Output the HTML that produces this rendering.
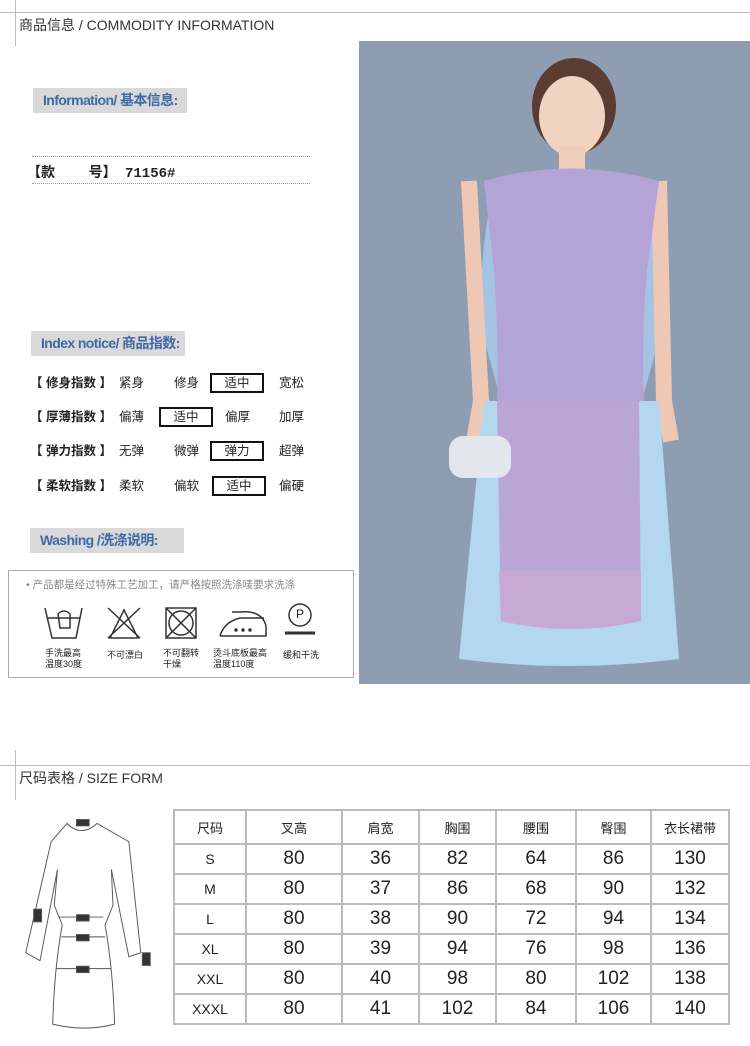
<!DOCTYPE html>
<html><head><meta charset="utf-8"><style>
*{margin:0;padding:0;box-sizing:border-box}
body{width:750px;height:1046px;background:#fff;position:relative;overflow:hidden;font-family:"Liberation Sans","Noto Sans CJK SC",sans-serif;color:#222}
.a{position:absolute}
.lbl{position:absolute;background:#d9d9d9;color:#3f6aa6;font-size:14px;letter-spacing:-0.6px;height:25px;line-height:25px;padding-left:10px;font-weight:bold}
.row{position:absolute;left:30px;font-size:12.5px;height:20px;line-height:20px}
.row span{position:absolute;white-space:nowrap}
.box{border:2px solid #111;text-align:center;width:54px;height:20px;line-height:16px;top:0}
table{position:absolute;left:173px;top:809px;border-collapse:collapse}
td{border:2px solid #bbb;text-align:center;font-size:19px;height:30px;padding:0}
tr:first-child td{font-size:13px;height:34px}
</style></head><body>
<div class="a" style="left:0;top:12px;width:750px;height:1px;background:#bbb"></div>
<div class="a" style="left:15px;top:0;width:1px;height:46px;background:#bbb"></div>
<div class="a" style="left:19px;top:15px;font-size:14px;color:#333">商品信息 / COMMODITY INFORMATION</div>

<div class="lbl" style="left:33px;top:88px;width:154px">Information/ 基本信息:</div>
<div class="a" style="left:32px;top:156px;width:278px;border-top:1px dotted #999"></div>
<div class="a" style="left:27px;top:162px;font-size:14px;font-weight:bold;font-family:'Liberation Mono','Noto Sans CJK SC',monospace">【款&nbsp;&nbsp;&nbsp;&nbsp;号】&nbsp;71156#</div>
<div class="a" style="left:32px;top:183px;width:278px;border-top:1px dotted #999"></div>

<div class="lbl" style="left:31px;top:331px;width:154px">Index notice/ 商品指数:</div>
<div class="row" style="top:373px"><span style="left:0;font-weight:bold">【 修身指数 】</span><span style="left:89px">紧身</span><span style="left:144px">修身</span><span class="box" style="left:180px">适中</span><span style="left:249px">宽松</span></div>
<div class="row" style="top:407px"><span style="left:0;font-weight:bold">【 厚薄指数 】</span><span style="left:89px">偏薄</span><span class="box" style="left:129px">适中</span><span style="left:195px">偏厚</span><span style="left:249px">加厚</span></div>
<div class="row" style="top:441px"><span style="left:0;font-weight:bold">【 弹力指数 】</span><span style="left:89px">无弹</span><span style="left:144px">微弹</span><span class="box" style="left:180px">弹力</span><span style="left:249px">超弹</span></div>
<div class="row" style="top:476px"><span style="left:0;font-weight:bold">【 柔软指数 】</span><span style="left:89px">柔软</span><span style="left:144px">偏软</span><span class="box" style="left:182px">适中</span><span style="left:249px">偏硬</span></div>

<div class="lbl" style="left:30px;top:528px;width:154px">Washing /洗涤说明:</div>
<div class="a" style="left:8px;top:570px;width:346px;height:108px;border:1px solid #aaa"></div>
<div class="a" style="left:26px;top:577px;font-size:10.5px;color:#888">• 产品都是经过特殊工艺加工，请严格按照洗涤唛要求洗涤</div>
<svg class="a" style="left:0;top:600px" width="360" height="50" fill="none" stroke="#333" stroke-width="1.5">
<path d="M45 8 L52 38 H76 L82 8 M48 18 H80"/><path d="M58 14 q6 -6 12 0 v14 h-10 z"/>
<path d="M108 8 L140 38 M140 8 L108 38 M110 38 L124 10 L138 38 Z"/>
<path d="M166 8 H196 V38 H166 Z M166 8 L196 38 M196 8 L166 38"/><circle cx="181" cy="23" r="12"/>
<path d="M220 36 H266 V26 Q262 10 240 12 L232 12 M220 36 Q224 22 240 18 H264"/><circle cx="236" cy="30" r="1" fill="#333"/><circle cx="243" cy="30" r="1" fill="#333"/><circle cx="250" cy="30" r="1" fill="#333"/>
<circle cx="300" cy="15" r="11"/><path d="M285 33 H315" stroke-width="3"/>
</svg>
<div class="a" style="left:296px;top:607px;font-size:12px">P</div>
<div class="a" style="left:45px;top:648px;font-size:9px;line-height:11px">手洗最高<br>温度30度</div>
<div class="a" style="left:107px;top:648px;font-size:9px">不可漂白</div>
<div class="a" style="left:163px;top:648px;font-size:9px;line-height:11px">不可翻转<br>干燥</div>
<div class="a" style="left:213px;top:648px;font-size:9px;line-height:11px">烫斗底板最高<br>温度110度</div>
<div class="a" style="left:283px;top:648px;font-size:9px">缓和干洗</div>

<svg class="a" style="left:359px;top:41px" width="391" height="643">
<rect width="391" height="643" fill="#8e9db1"/>
<ellipse cx="215" cy="65" rx="42" ry="48" fill="#5a3d30"/>
<ellipse cx="213" cy="75" rx="33" ry="40" fill="#f2d3c2"/>
<rect x="200" y="105" width="26" height="30" fill="#efcdbb"/>
<path d="M130 450 Q135 400 145 370 L120 280 Q125 160 140 140 L290 140 Q305 160 305 280 L280 370 Q288 420 292 450 Z" fill="#a7c3e4"/>
<path d="M110 140 L122 360 L115 400 M300 140 L305 360 L312 400" stroke="#efc8b5" stroke-width="16" fill="none"/>
<path d="M125 140 Q210 115 300 140 L288 230 Q282 300 285 360 L280 580 Q210 590 140 580 L138 360 Q140 300 135 230 Z" fill="#b4a3d6"/>
<path d="M125 360 L100 618 Q210 632 320 618 L300 360 Z" fill="#b3d7ef"/>
<path d="M138 360 Q140 480 142 580 Q210 596 282 580 L280 360 Z" fill="#b9a6d7"/>
<path d="M140 530 L282 530 L282 580 Q210 596 142 580 Z" fill="#c8a8d5"/>
<rect x="90" y="395" width="62" height="42" rx="14" fill="#e3e6ec"/>
</svg>

<div class="a" style="left:0;top:765px;width:750px;height:1px;background:#bbb"></div>
<div class="a" style="left:15px;top:750px;width:1px;height:50px;background:#bbb"></div>
<div class="a" style="left:19px;top:768px;font-size:14px;color:#333">尺码表格 / SIZE FORM</div>
<svg class="a" style="left:0;top:810px" width="172" height="230" viewBox="0 0 172 290" fill="none" stroke="#555" stroke-width="1.2">
<path d="M62 17 Q80 35 100 17 L140 40 L155 180 L140 185 L118 75 L120 120 L110 145 Q120 200 122 270 Q85 280 44 270 Q46 200 56 145 L46 120 L50 75 L28 190 L10 180 L42 40 Z"/>
<path d="M52 135 H108 M48 200 H118 M55 160 H110"/>
<rect x="74" y="12" width="16" height="8" fill="#333"/><rect x="74" y="132" width="16" height="8" fill="#333"/><rect x="74" y="157" width="16" height="8" fill="#333"/><rect x="74" y="197" width="16" height="8" fill="#333"/>
<rect x="20" y="125" width="10" height="16" fill="#333"/><rect x="157" y="180" width="10" height="16" fill="#333"/>
</svg>
<table>
<tr><td style="width:72px">尺码</td><td style="width:96px">叉高</td><td style="width:77px">肩宽</td><td style="width:77px">胸围</td><td style="width:80px">腰围</td><td style="width:75px">臀围</td><td style="width:78px">衣长裙带</td></tr>
<tr><td style="font-size:14px">S</td><td>80</td><td>36</td><td>82</td><td>64</td><td>86</td><td>130</td></tr>
<tr><td style="font-size:14px">M</td><td>80</td><td>37</td><td>86</td><td>68</td><td>90</td><td>132</td></tr>
<tr><td style="font-size:14px">L</td><td>80</td><td>38</td><td>90</td><td>72</td><td>94</td><td>134</td></tr>
<tr><td style="font-size:14px">XL</td><td>80</td><td>39</td><td>94</td><td>76</td><td>98</td><td>136</td></tr>
<tr><td style="font-size:14px">XXL</td><td>80</td><td>40</td><td>98</td><td>80</td><td>102</td><td>138</td></tr>
<tr><td style="font-size:14px">XXXL</td><td>80</td><td>41</td><td>102</td><td>84</td><td>106</td><td>140</td></tr>
</table>
</body></html>
